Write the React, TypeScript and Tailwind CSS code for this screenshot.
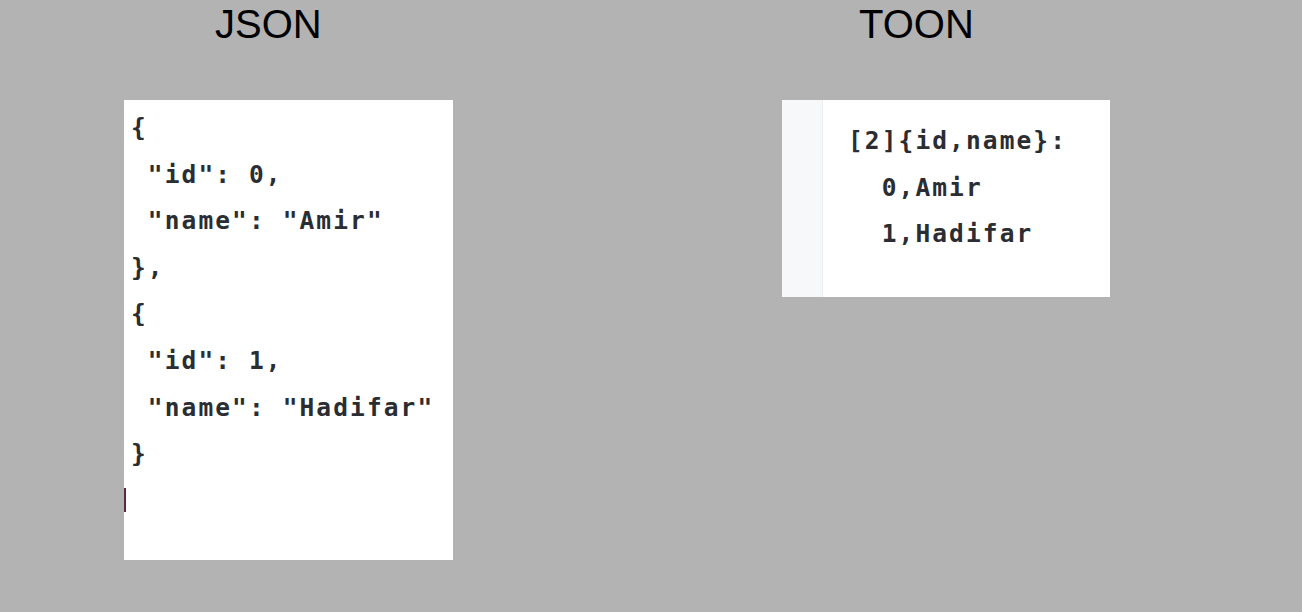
export default function App() {
  const codeFont = {
    fontFamily: '"DejaVu Sans Mono", "Liberation Mono", monospace',
  };

  const jsonLines = [
    "{",
    ' "id": 0,',
    ' "name": "Amir"',
    "},",
    "{",
    ' "id": 1,',
    ' "name": "Hadifar"',
    "}",
  ];

  const toonLines = ["[2]{id,name}:", "  0,Amir", "  1,Hadifar"];

  return (
    <main className="flex min-h-[612px] w-full bg-[#b3b3b3] text-black">
      {/* JSON column */}
      <section className="flex w-[651px] flex-col">
        <h1 className="ml-[215px] pt-[4px] text-[40px] leading-none font-normal font-['Liberation_Sans',Arial,sans-serif]">
          JSON
        </h1>
        <div className="ml-[124px] mt-[56px] h-[460px] w-[329px] bg-white pt-[5px] pl-[7px]">
          <pre
            style={codeFont}
            className="m-0 text-[24.5px] font-bold leading-[46.6px] tracking-[2.1px] text-[#2a2d32]"
          >
            {jsonLines.map((line, i) => (
              <div key={i}>{line}</div>
            ))}
          </pre>
          <div className="-ml-[7px] mt-[10px] h-[24px] w-[2px] bg-[#5b2a3c]" />
        </div>
      </section>

      {/* TOON column */}
      <section className="flex w-[651px] flex-col">
        <h1 className="ml-[208px] pt-[4px] text-[40px] leading-none font-normal font-['Liberation_Sans',Arial,sans-serif]">
          TOON
        </h1>
        <div className="ml-[131px] mt-[56px] flex h-[197px] w-[328px] bg-white">
          <div className="w-[41px] border-r border-[#ebedf1] bg-[#f7f8fa]" />
          <pre
            style={codeFont}
            className="m-0 pt-[18px] pl-[25px] text-[24.5px] font-bold leading-[46.6px] tracking-[2.1px] text-[#2a2d32]"
          >
            {toonLines.map((line, i) => (
              <div key={i}>{line}</div>
            ))}
          </pre>
        </div>
      </section>
    </main>
  );
}
